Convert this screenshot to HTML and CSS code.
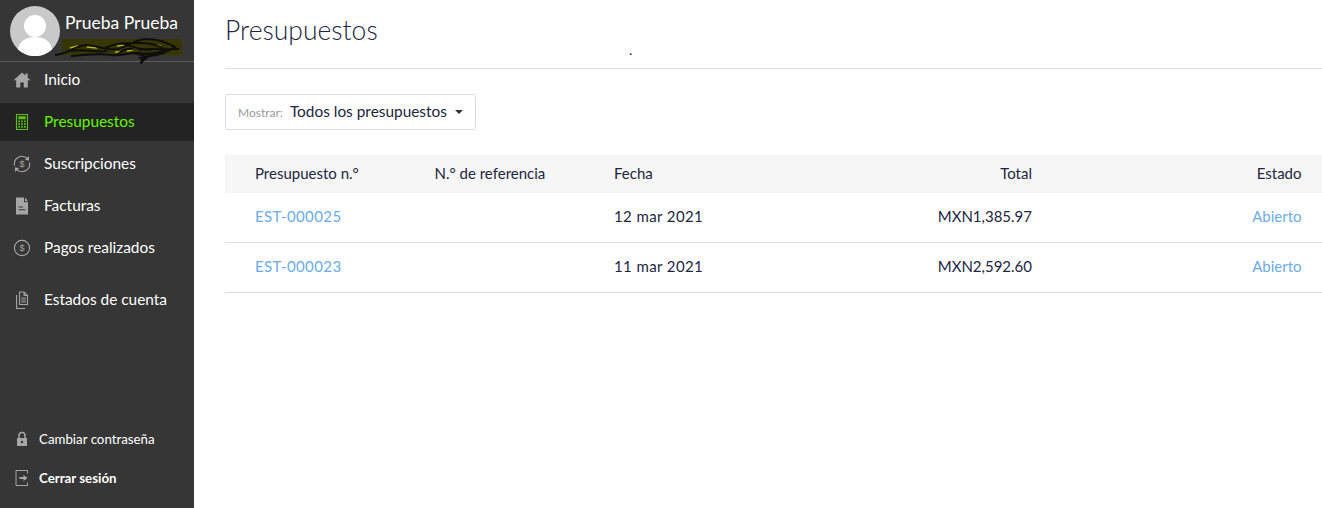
FILE: index.html
```html
<!DOCTYPE html>
<html lang="es">
<head>
<meta charset="utf-8">
<title>Presupuestos</title>
<link rel="stylesheet" href="styles.css">
</head>
<body>
<div class="app">
  <aside class="sidebar">
    <div class="profile">
      <svg class="avatar" viewBox="0 0 50 50"><circle cx="25" cy="25" r="25" fill="#c9c9c9"/><circle cx="25" cy="20" r="11" fill="#fff"/><path d="M8 43.500c1-8 8-12.500 17-12.500s16 4.500 17 12.500a25 25 0 0 1-34 0z" fill="#fff"/></svg>
      <div class="profile-text">
        <div class="profile-name">Prueba Prueba</div>
        <svg class="scribble" viewBox="0 0 130 26"><rect x="7" y="1" width="120" height="16" fill="#363600"/><path d="M15 10l8-2M32 9l10 1M62 8l8-1M72 13l6-1M100 7l6 1M60 14l6 0" fill="none" stroke="#b8b818" stroke-width="1.600"/><path d="M0 17C14 16 20 7 32 7c8 0 20 6 30 4 12-3 18-10 30-10 12 0 20 4 28 8-8 5-14 8-26 9-4 2-6 5-8 7 0-4 4-6 2-9-10-4-20 3-32 1-14-2-26 0-40 1M14 13c14-3 26 2 38 0M50 10c12-6 24-5 36-5 8 0 18 2 24 7-6 4-16 3-26 5M62 17c4-4 10-7 16-6M84 12c8-2 24 0 40-1M66 5c10 2 18 8 30 7M78 15c6 2 14 0 22 1M84 20c6-1 12-2 16-4" fill="none" stroke="#0e0e0e" stroke-width="2"/></svg>
      </div>
    </div>
    <nav class="menu">
      <a class="item"><svg class="icon" viewBox="0 0 18 18"><path fill="#a6a6a6" d="M9 1.500.6 9.200h2.600v7.300h4v-5h3.600v5h4V9.200h2.600l-2.700-2.500V2.500h-2.200v2.100z"/></svg><span>Inicio</span></a>
      <a class="item active"><svg class="icon" viewBox="0 0 18 18"><path fill="none" stroke="#5fc311" stroke-width="1.100" d="M3.500 1.500h11v15h-11z"/><path fill="#5fc311" d="M5.300 3.200h7.400v3H5.300zM5.300 7.600H7v1.700H5.300zM8.200 7.600h1.700v1.700H8.200zM11 7.600h1.700v1.700H11zM5.300 10.300H7V12H5.300zM8.200 10.300h1.700V12H8.200zM11 10.300h1.700V12H11zM5.300 13H7v1.700H5.300zM8.200 13h1.700v1.700H8.200zM11 13h1.700v1.700H11z"/></svg><span>Presupuestos</span></a>
      <a class="item"><svg class="icon" viewBox="0 0 18 18"><path fill="none" stroke="#a6a6a6" stroke-width="1.100" d="M1.600 10.500A7.500 7.500 0 0 1 13.800 3.200M16.400 7.500A7.500 7.500 0 0 1 4.200 14.800"/><path fill="#a6a6a6" d="m15.800 1 .3 4.400-4.300-.5zM2.200 17l-.3-4.400 4.300.5z"/><text x="9" y="12" class="icon-sign" text-anchor="middle">$</text></svg><span>Suscripciones</span></a>
      <a class="item"><svg class="icon" viewBox="0 0 18 18"><path fill="#a6a6a6" fill-rule="evenodd" d="M3 .5h8v4.800h4v12.200H3zM5.500 9.500v1.100h4.500V9.500zM5.500 12.200v1.100h7v-1.100zM12 .5l3 3.800h-3z"/></svg><span>Facturas</span></a>
      <a class="item item-pay"><svg class="icon" viewBox="0 0 18 18"><circle cx="9" cy="9" r="7.600" fill="none" stroke="#a6a6a6" stroke-width="1.100"/><text x="9" y="12.300" class="icon-sign" text-anchor="middle">$</text></svg><span>Pagos realizados</span></a>
      <a class="item statement"><svg class="icon" viewBox="0 0 18 18"><path fill="none" stroke="#a6a6a6" stroke-width="1.100" d="M6.600 1H11l3.500 3.500V13.500H6.600zM3.600 4v13.500h8.500M11 1v3.500h3.500M8.300 7h4.500M8.300 9h4.500M8.300 11h4.500"/></svg><span>Estados de cuenta</span></a>
    </nav>
    <div class="account">
      <a class="account-item"><svg class="icon-small" viewBox="0 0 14 16"><path fill="none" stroke="#a6a6a6" stroke-width="1.500" d="M4 7V4.500a3 3 0 0 1 6 0V7"/><path fill="#a6a6a6" fill-rule="evenodd" d="M2 7h10v8H2zM7 9.800a1.200 1.200 0 1 0 0 2.400 1.200 1.200 0 0 0 0-2.400z"/></svg><span>Cambiar contraseña</span></a>
      <a class="account-item strong"><svg class="icon-small" viewBox="0 0 14 16"><path fill="none" stroke="#a6a6a6" d="M12.500 3.500v-3H1v15h11.500v-3"/><path fill="#a6a6a6" d="M4.500 7h4V5l4 3-4 3V9h-4z"/></svg><span>Cerrar sesión</span></a>
    </div>
  </aside>
  <main class="content">
    <header class="page-head">
      <h1>Presupuestos</h1>
      <span class="dot">.</span>
    </header>
    <div class="filter">
      <button class="filter-button"><span class="filter-label">Mostrar:</span><span>Todos los presupuestos</span><span class="caret"></span></button>
    </div>
    <table class="estimates">
      <thead>
        <tr><th class="col-number">Presupuesto n.°</th><th class="col-ref">N.° de referencia</th><th class="col-date">Fecha</th><th class="num">Total</th><th class="num col-status">Estado</th></tr>
      </thead>
      <tbody>
        <tr><td class="col-number"><a class="wide">EST-000025</a></td><td></td><td class="wide">12 mar 2021</td><td class="num">MXN1,385.97</td><td class="num col-status"><a>Abierto</a></td></tr>
        <tr><td class="col-number"><a class="wide">EST-000023</a></td><td></td><td class="wide">11 mar 2021</td><td class="num">MXN2,592.60</td><td class="num col-status"><a>Abierto</a></td></tr>
      </tbody>
    </table>
  </main>
</div>
</body>
</html>
```
FILE: styles.css
```css
* { box-sizing: border-box; }
html, body { margin: 0; height: 100%; }
body { font-family: "Lato", "Open Sans", sans-serif; color: #21263c; background: #fff; overflow: hidden; }
.app { display: flex; height: 508px; }
.sidebar { width: 194px; flex: none; background: #363636; display: flex; flex-direction: column; color: #fff; }
.profile { height: 62px; display: flex; gap: 5px; padding: 6px 0 0 10px; border-bottom: 1px solid #5c5c5c; }
.avatar { width: 50px; height: 50px; flex: none; }
.profile-text { min-width: 0; }
.profile-name { font-size: 17.500px; line-height: 24px; margin-top: 5px; white-space: nowrap; }
.scribble { display: block; width: 130px; height: 26px; margin-top: 3px; margin-left: -10px; }
.menu { display: flex; flex-direction: column; gap: 4px; margin-top: -1px; }
.item { height: 38px; display: flex; align-items: center; padding-left: 13px; gap: 13px; font-size: 15.400px; color: #fff; }
.item span { margin-top: -2px; }
.item.active { background: #232323; color: #66f500; }
.item.statement { margin-top: 10px; }
.icon { width: 18px; height: 18px; flex: none; }
.icon-sign { font-size: 9px; fill: #a6a6a6; font-family: "Liberation Sans", sans-serif; }
.account { margin-top: auto; padding-bottom: 11px; }
.account-item { height: 39px; display: flex; align-items: center; gap: 10px; padding-left: 15px; font-size: 13.300px; color: #fff; }
.account-item.strong { font-weight: 700; }
.icon-small { width: 14px; height: 16px; flex: none; }
.content { flex: 1; min-width: 0; padding-left: 31px; }
.page-head { height: 69px; border-bottom: 1px solid #dcdcdc; position: relative; }
h1 { margin: 0; padding-top: 14px; font-size: 26.500px; line-height: 32px; font-weight: 300; color: #21263c; }
.dot { position: absolute; left: 404px; top: 42px; font-size: 14px; line-height: 16px; }
.filter { padding-top: 25px; }
.filter-button { display: flex; align-items: center; height: 36px; width: 251px; padding: 0 12px; border: 1px solid #dadada; border-radius: 3px; background: #fff; font: inherit; font-size: 15.400px; color: #21263c; }
.filter-button span { margin-top: -3px; }
.filter-label { font-size: 12px; color: #999; margin-right: 7px; padding-top: 3px; }
.filter-button .caret { margin-top: -1px; }
.caret { width: 0; height: 0; margin-left: 8px; border-left: 4px solid transparent; border-right: 4px solid transparent; border-top: 4px solid #333; }
.estimates { width: 100%; margin-top: 25px; border-collapse: separate; border-spacing: 0; table-layout: fixed; font-size: 15px; }
.estimates th { height: 38px; padding-bottom: 3px; background: #f6f6f6; font-weight: 400; text-align: left; }
.estimates td { height: 50px; padding-bottom: 4px; border-bottom: 1px solid #dcdce4; }
.col-number { width: 208.500px; padding-left: 30px; }
.col-ref { width: 179.500px; }
.col-date { width: 180px; }
.estimates .num { text-align: right; }
.estimates .col-status { width: 289px; padding-right: 20.500px; }
.estimates a { color: #6aace6; }
.wide { letter-spacing: .4px; }
```
